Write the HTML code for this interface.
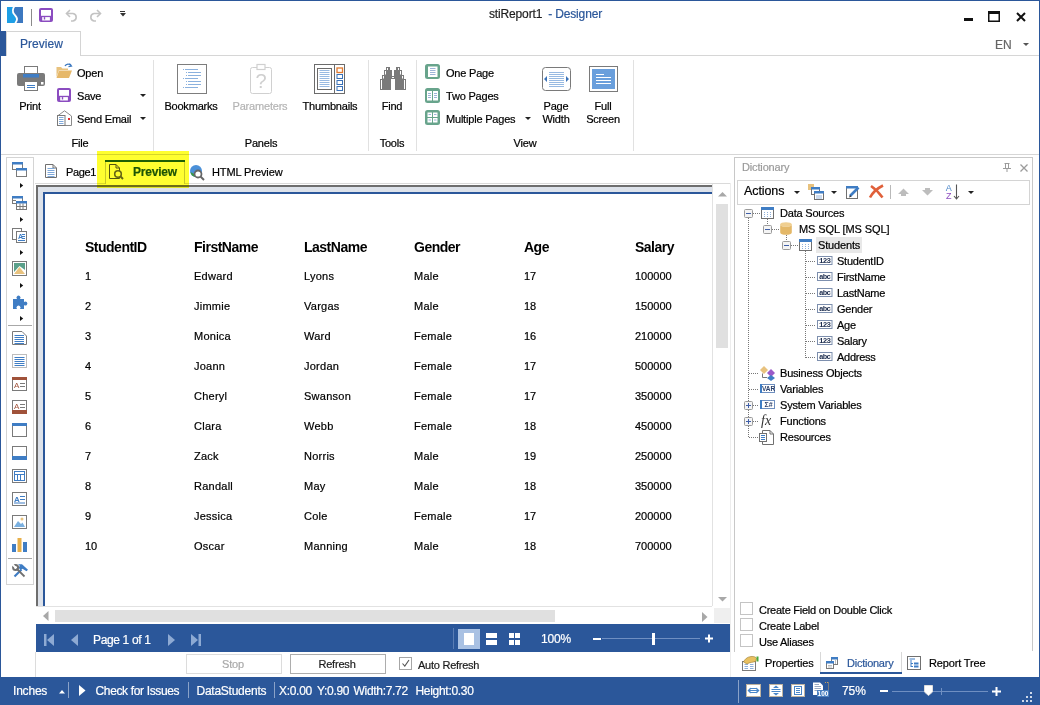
<!DOCTYPE html>
<html><head><meta charset="utf-8">
<style>
*{margin:0;padding:0;box-sizing:border-box}
html,body{width:1040px;height:705px;overflow:hidden;background:#fff;font-family:"Liberation Sans",sans-serif;color:#222;font-size:12px}
.a{position:absolute}
.t{position:absolute;white-space:nowrap;line-height:1;-webkit-text-stroke:0.2px currentColor}
svg{position:absolute;overflow:visible}
</style></head><body>
<div class="a" style="left:0px;top:0px;width:1040px;height:1px;background:#2b579a;"></div>
<div class="a" style="left:0px;top:0px;width:1px;height:705px;background:#2b579a;"></div>
<div class="a" style="left:1039px;top:0px;width:1px;height:705px;background:#2b579a;"></div>
<svg style="left:7px;top:7px" width="16" height="16" viewBox="0 0 16 16"><path d="M0 0 H7.2 C5.6 2 5.4 4.8 7 7 C8.5 9 10.8 10.5 9.9 13 C9.5 14.3 8.8 15.3 8.2 16 H0 Z" fill="#1d9fe6"/><path d="M16 0 H7.2 C5.6 2 5.4 4.8 7 7 C8.5 9 10.8 10.5 9.9 13 C9.5 14.3 8.8 15.3 8.2 16 H16 Z" fill="#3c78c0"/><path d="M7.2 -0.5 C5.6 2 5.4 4.8 7 7 C8.5 9 10.8 10.5 9.9 13 C9.5 14.3 8.8 15.3 8.2 16.5" stroke="#fff" stroke-width="1.8" fill="none"/></svg>
<div class="a" style="left:31px;top:9px;width:1px;height:17px;background:#8a8a8a;"></div>
<svg style="left:39px;top:8px" width="14" height="14" viewBox="0 0 14 14"><rect x="0" y="0" width="14" height="14" rx="2" fill="#8b4cc0"/><rect x="2" y="2" width="10" height="5.8" fill="#fff"/><rect x="3.2" y="9.1" width="7.7" height="3.4" fill="#fff"/><rect x="4.8" y="9.1" width="1.4" height="2.4" fill="#8b4cc0"/></svg>
<svg style="left:65px;top:9px" width="13" height="12" viewBox="0 0 13 12"><path d="M2 4.5 H8 A3.8 3.8 0 0 1 8 12 H6" stroke="#c3c3c3" stroke-width="1.6" fill="none"/><path d="M5 1 L1.5 4.5 L5 8" stroke="#c3c3c3" stroke-width="1.6" fill="none"/></svg>
<svg style="left:89px;top:9px" width="13" height="12" viewBox="0 0 13 12"><path d="M11 4.5 H5 A3.8 3.8 0 0 0 5 12 H7" stroke="#c3c3c3" stroke-width="1.6" fill="none"/><path d="M8 1 L11.5 4.5 L8 8" stroke="#c3c3c3" stroke-width="1.6" fill="none"/></svg>
<div class="a" style="left:120px;top:11px;width:5px;height:1px;background:#333;"></div>
<svg style="left:119.5px;top:13px" width="6" height="4" viewBox="0 0 6 4"><path d="M0 0 H6 L3 3.5 Z" fill="#333"/></svg>
<div class="t" style="left:489px;top:7.84px;font-size:12px;color:#1e1e1e;letter-spacing:-0.15px;">stiReport1</div>
<div class="t" style="left:545px;top:7.84px;font-size:12px;color:#2b579a;letter-spacing:-0.15px;">&nbsp;- Designer</div>
<div class="a" style="left:964px;top:18px;width:9px;height:3px;background:#111;"></div>
<svg style="left:988px;top:11px" width="11" height="10" viewBox="0 0 11 10"><rect x="0.75" y="0.75" width="10.5" height="9.5" fill="none" stroke="#111" stroke-width="1.5"/><rect x="0.5" y="0.5" width="11" height="2.5" fill="#111"/></svg>
<svg style="left:1016px;top:12px" width="10" height="10" viewBox="0 0 10 10"><path d="M1 1 L9 9 M9 1 L1 9" stroke="#111" stroke-width="2"/></svg>
<div class="a" style="left:1px;top:31px;width:5px;height:25px;background:#2b579a;"></div>
<div class="a" style="left:6px;top:31px;width:75px;height:25px;background:#fff;border:1px solid #d4d4d4;border-bottom:none;"></div>
<div class="a" style="left:81px;top:55px;width:958px;height:1px;background:#d6d6d6;"></div>
<div class="t" style="left:20px;top:37.84px;font-size:12px;color:#2b579a;letter-spacing:0.05px;">Preview</div>
<div class="t" style="left:995px;top:38.84px;font-size:12px;color:#666;">EN</div>
<svg style="left:1023px;top:43px" width="6" height="4" viewBox="0 0 6 4"><path d="M0 0 H6 L3 3 Z" fill="#555"/></svg>
<div class="a" style="left:1px;top:154px;width:1038px;height:1px;background:#d6d6d6;"></div>
<div class="a" style="left:153px;top:60px;width:1px;height:91px;background:#e1e1e1;"></div>
<div class="a" style="left:368px;top:60px;width:1px;height:91px;background:#e1e1e1;"></div>
<div class="a" style="left:416px;top:60px;width:1px;height:91px;background:#e1e1e1;"></div>
<div class="a" style="left:633px;top:60px;width:1px;height:91px;background:#e1e1e1;"></div>
<svg style="left:17px;top:66px" width="28" height="25" viewBox="0 0 28 25"><rect x="7.5" y="0.5" width="13" height="7.5" fill="#fff" stroke="#7a7a7a" stroke-width="1"/><rect x="0" y="7" width="28" height="13" rx="2" fill="#7a7a7a"/><rect x="6" y="8" width="16" height="3.5" fill="#3f7dc4"/><rect x="24" y="16" width="2.5" height="2.5" fill="#fff"/><rect x="7.5" y="15.5" width="13" height="9" fill="#fff" stroke="#7a7a7a" stroke-width="1"/><path d="M10 19.5 H18 M10 21.5 H18" stroke="#3f7dc4" stroke-width="1"/></svg>
<div class="t" style="left:-70px;width:200px;text-align:center;top:100.69px;font-size:11px;color:#000;letter-spacing:-0.2px;">Print</div>
<svg style="left:56px;top:63px" width="16" height="16" viewBox="0 0 16 16"><path d="M0.5 4 H5 L6.5 5.5 H12 V7 H3 L0.5 14 Z" fill="#e8c27e"/><path d="M3 7.5 H16 L13 15 H0.5 Z" fill="#e6b86a"/><path d="M9 3 A3.5 3.5 0 0 1 15 2.5" stroke="#3b78c0" stroke-width="1.3" fill="none"/><path d="M13.5 0.5 L15.5 3 L12.5 3.6" stroke="#3b78c0" stroke-width="1.2" fill="none"/></svg>
<div class="t" style="left:77px;top:67.69px;font-size:11px;color:#000;letter-spacing:-0.2px;">Open</div>
<svg style="left:57px;top:88px" width="14" height="14" viewBox="0 0 14 14"><rect x="0" y="0" width="14" height="14" rx="2" fill="#8b4cc0"/><rect x="2" y="2" width="10" height="5.8" fill="#fff"/><rect x="3.2" y="9.1" width="7.7" height="3.4" fill="#fff"/><rect x="4.8" y="9.1" width="1.4" height="2.4" fill="#8b4cc0"/></svg>
<div class="t" style="left:77px;top:90.69px;font-size:11px;color:#000;letter-spacing:-0.2px;">Save</div>
<svg style="left:140px;top:94px" width="6" height="4" viewBox="0 0 6 4"><path d="M0 0 H6 L3 3 Z" fill="#222"/></svg>
<svg style="left:57px;top:110px" width="15" height="16" viewBox="0 0 15 16"><path d="M0.5 6 L7.5 0.8 L14.5 6 V15.5 H0.5 Z" fill="#fff" stroke="#8a8a8a" stroke-width="1"/><rect x="0.5" y="5.5" width="7.5" height="10" fill="#fff" stroke="#7a7a7a" stroke-width="1"/><path d="M2 7.5 H6.5 M2 9.5 H6.5 M2 11.5 H6.5 M2 13.5 H6.5" stroke="#7ea8da" stroke-width="1"/><rect x="11" y="8" width="2" height="2" fill="#e03030"/></svg>
<div class="t" style="left:77px;top:113.69px;font-size:11px;color:#000;letter-spacing:-0.2px;">Send Email</div>
<svg style="left:140px;top:117px" width="6" height="4" viewBox="0 0 6 4"><path d="M0 0 H6 L3 3 Z" fill="#222"/></svg>
<div class="t" style="left:-20px;width:200px;text-align:center;top:137.69px;font-size:11px;color:#000;letter-spacing:-0.2px;">File</div>
<svg style="left:177px;top:64px" width="30" height="30" viewBox="0 0 30 30"><rect x="0.5" y="0.5" width="29" height="29" fill="#fff" stroke="#7d7d7d" stroke-width="1"/><path d="M6.0 5.5 H7.0 M8 5.5 H21" stroke="#7ea8da" stroke-width="0.9"/><path d="M9.0 8.5 H10.0 M11 8.5 H24" stroke="#7ea8da" stroke-width="0.9"/><path d="M9.0 11.5 H10.0 M11 11.5 H24" stroke="#7ea8da" stroke-width="0.9"/><path d="M6.0 14.5 H7.0 M8 14.5 H21" stroke="#7ea8da" stroke-width="0.9"/><path d="M9.0 17.5 H10.0 M11 17.5 H24" stroke="#7ea8da" stroke-width="0.9"/><path d="M9.0 20.5 H10.0 M11 20.5 H24" stroke="#7ea8da" stroke-width="0.9"/><path d="M6.0 23.5 H7.0 M8 23.5 H21" stroke="#7ea8da" stroke-width="0.9"/></svg>
<div class="t" style="left:91px;width:200px;text-align:center;top:100.69px;font-size:11px;color:#000;letter-spacing:-0.2px;">Bookmarks</div>
<svg style="left:250px;top:64px" width="22" height="30" viewBox="0 0 22 30"><rect x="0.5" y="3.5" width="21" height="26" rx="2" fill="#fff" stroke="#d0d0d0" stroke-width="1"/><rect x="7" y="0.5" width="8" height="5" fill="#fff" stroke="#d0d0d0" stroke-width="1.2"/><text x="11" y="24" font-size="20" text-anchor="middle" fill="#cfcfcf" font-family="Liberation Sans">?</text></svg>
<div class="t" style="left:160px;width:200px;text-align:center;top:100.69px;font-size:11px;color:#b4b4b4;letter-spacing:-0.2px;">Parameters</div>
<svg style="left:314px;top:64px" width="31" height="30" viewBox="0 0 31 30"><rect x="0.5" y="0.5" width="30" height="29" fill="#fff" stroke="#6b6b6b" stroke-width="1"/><rect x="3.5" y="4.5" width="14" height="21" fill="#fff" stroke="#6b6b6b" stroke-width="1"/><path d="M5.5 6.5 H15.5" stroke="#7ea8da" stroke-width="0.8"/><path d="M5.5 8.5 H15.5" stroke="#7ea8da" stroke-width="0.8"/><path d="M5.5 10.5 H15.5" stroke="#7ea8da" stroke-width="0.8"/><path d="M5.5 12.5 H15.5" stroke="#7ea8da" stroke-width="0.8"/><path d="M5.5 14.5 H15.5" stroke="#7ea8da" stroke-width="0.8"/><path d="M5.5 16.5 H15.5" stroke="#7ea8da" stroke-width="0.8"/><path d="M5.5 18.5 H15.5" stroke="#7ea8da" stroke-width="0.8"/><path d="M5.5 20.5 H15.5" stroke="#7ea8da" stroke-width="0.8"/><path d="M5.5 22.5 H15.5" stroke="#7ea8da" stroke-width="0.8"/><path d="M20.5 0.5 V29.5" stroke="#6b6b6b"/><rect x="23" y="4" width="5.5" height="4.5" fill="#fff" stroke="#e07a30" stroke-width="1.3"/><rect x="23" y="10.5" width="5.5" height="4" fill="none" stroke="#3b72b8" stroke-width="1"/><rect x="23" y="16.5" width="5.5" height="4" fill="none" stroke="#3b72b8" stroke-width="1"/><rect x="23" y="22.5" width="5.5" height="4" fill="none" stroke="#3b72b8" stroke-width="1"/></svg>
<div class="t" style="left:230px;width:200px;text-align:center;top:100.69px;font-size:11px;color:#000;letter-spacing:-0.2px;">Thumbnails</div>
<div class="t" style="left:161px;width:200px;text-align:center;top:137.69px;font-size:11px;color:#000;letter-spacing:-0.2px;">Panels</div>
<svg style="left:380px;top:67px" width="26" height="23" viewBox="0 0 26 23"><rect x="6" y="0" width="4" height="3.2" fill="#7a7a7a"/><rect x="4" y="3" width="8" height="5" fill="#7a7a7a"/><rect x="2" y="8" width="10" height="4" fill="#7a7a7a"/><rect x="0" y="12" width="11" height="11" fill="#7a7a7a"/><rect x="16" y="0" width="4" height="3.2" fill="#7a7a7a"/><rect x="14" y="3" width="8" height="5" fill="#7a7a7a"/><rect x="14" y="8" width="10" height="4" fill="#7a7a7a"/><rect x="15" y="12" width="11" height="11" fill="#7a7a7a"/><rect x="11" y="9" width="4" height="3" fill="#7a7a7a"/><rect x="7" y="1" width="1" height="2" fill="#fff"/><rect x="5" y="4" width="1" height="3.5" fill="#fff"/><rect x="3" y="9" width="1" height="2.5" fill="#fff"/><rect x="1" y="13" width="1" height="9" fill="#fff"/><rect x="18" y="1" width="1" height="2" fill="#fff"/><rect x="20" y="4" width="1" height="3.5" fill="#fff"/><rect x="22" y="9" width="1" height="2.5" fill="#fff"/><rect x="24" y="13" width="1" height="9" fill="#fff"/><rect x="12" y="10" width="2" height="1" fill="#fff"/></svg>
<div class="t" style="left:292px;width:200px;text-align:center;top:100.69px;font-size:11px;color:#000;letter-spacing:-0.2px;">Find</div>
<div class="t" style="left:292px;width:200px;text-align:center;top:137.69px;font-size:11px;color:#000;letter-spacing:-0.2px;">Tools</div>
<svg style="left:425px;top:64px" width="15" height="15" viewBox="0 0 15 15"><rect x="0" y="0" width="15" height="15" rx="2.5" fill="#68a48c"/><rect x="3" y="2.5" width="9.5" height="10.5" fill="#fff"/><path d="M5 4.5 H10.5 M5 6.5 H10.5 M5 8.5 H10.5 M5 10.5 H10.5" stroke="#9db4d8" stroke-width="1"/></svg>
<div class="t" style="left:446px;top:67.69px;font-size:11px;color:#000;letter-spacing:-0.2px;">One Page</div>
<svg style="left:425px;top:88px" width="15" height="15" viewBox="0 0 15 15"><rect x="0" y="0" width="15" height="15" rx="2.5" fill="#68a48c"/><rect x="2" y="3" width="5" height="9.5" fill="#fff"/><rect x="8" y="3" width="5" height="9.5" fill="#fff"/><path d="M3 5.5 H6 M3 7.5 H6 M3 9.5 H6 M9 5.5 H12 M9 7.5 H12 M9 9.5 H12" stroke="#9db4d8" stroke-width="1"/></svg>
<div class="t" style="left:446px;top:90.69px;font-size:11px;color:#000;letter-spacing:-0.2px;">Two Pages</div>
<svg style="left:425px;top:110px" width="15" height="15" viewBox="0 0 15 15"><rect x="0" y="0" width="15" height="15" rx="2.5" fill="#68a48c"/><rect x="2.5" y="2.5" width="4.5" height="4.5" fill="#fff"/><rect x="8" y="2.5" width="4.5" height="4.5" fill="#fff"/><rect x="2.5" y="8" width="4.5" height="4.5" fill="#fff"/><rect x="8" y="8" width="4.5" height="4.5" fill="#fff"/><path d="M3.5 4.5 H6 M9 4.5 H11.5 M3.5 10 H6 M9 10 H11.5" stroke="#9db4d8" stroke-width="1"/></svg>
<div class="t" style="left:446px;top:113.69px;font-size:11px;color:#000;letter-spacing:-0.2px;">Multiple Pages</div>
<svg style="left:525px;top:117px" width="6" height="4" viewBox="0 0 6 4"><path d="M0 0 H6 L3 3 Z" fill="#222"/></svg>
<svg style="left:542px;top:67px" width="29" height="24" viewBox="0 0 29 24"><rect x="0.5" y="0.5" width="28" height="23" rx="3" fill="#fff" stroke="#7a7a7a" stroke-width="1"/><path d="M7 5.5 H22" stroke="#7ea8da" stroke-width="0.8"/><path d="M7 7.5 H22" stroke="#7ea8da" stroke-width="0.8"/><path d="M7 9.5 H22" stroke="#7ea8da" stroke-width="0.8"/><path d="M7 11.5 H22" stroke="#7ea8da" stroke-width="0.8"/><path d="M7 13.5 H22" stroke="#7ea8da" stroke-width="0.8"/><path d="M7 15.5 H22" stroke="#7ea8da" stroke-width="0.8"/><path d="M7 17.5 H22" stroke="#7ea8da" stroke-width="0.8"/><path d="M7 19.5 H22" stroke="#7ea8da" stroke-width="0.8"/><path d="M2 12 L5 9 V15 Z M27 12 L24 9 V15 Z" fill="#3b72b8"/></svg>
<div class="t" style="left:456px;width:200px;text-align:center;top:100.69px;font-size:11px;color:#000;letter-spacing:-0.2px;">Page</div>
<div class="t" style="left:456px;width:200px;text-align:center;top:113.69px;font-size:11px;color:#000;letter-spacing:-0.2px;">Width</div>
<svg style="left:589px;top:66px" width="29" height="26" viewBox="0 0 29 26"><rect x="0.5" y="0.5" width="28" height="25" fill="#fff" stroke="#7a7a7a" stroke-width="1"/><rect x="3" y="3" width="23" height="20" fill="#6a9fdc"/><path d="M7 8.5 H15 M7 11.5 H22 M7 14.5 H22 M7 17.5 H22" stroke="#fff" stroke-width="1"/></svg>
<div class="t" style="left:503px;width:200px;text-align:center;top:100.69px;font-size:11px;color:#000;letter-spacing:-0.2px;">Full</div>
<div class="t" style="left:503px;width:200px;text-align:center;top:113.69px;font-size:11px;color:#000;letter-spacing:-0.2px;">Screen</div>
<div class="t" style="left:425px;width:200px;text-align:center;top:137.69px;font-size:11px;color:#000;letter-spacing:-0.2px;">View</div>
<div class="a" style="left:6px;top:157px;width:28px;height:428px;background:#fff;border:1px solid #d4d4d4;"></div>
<svg style="left:12px;top:162px" width="15" height="15" viewBox="0 0 15 15"><rect x="0.5" y="0.5" width="10" height="7" fill="#fff" stroke="#7a7a7a"/><rect x="0" y="0" width="11" height="2.5" fill="#3f7dc4"/><rect x="4.5" y="6.5" width="10" height="8" fill="#fff" stroke="#7a7a7a"/><rect x="4" y="6" width="11" height="2.5" fill="#3f7dc4"/></svg>
<svg style="left:20px;top:183px" width="3" height="5" viewBox="0 0 3 5"><path d="M0 0 L3.2 2.5 L0 5 Z" fill="#111"/></svg>
<svg style="left:12px;top:196px" width="15" height="14" viewBox="0 0 15 14"><rect x="0.5" y="0.5" width="10" height="7" fill="#fff" stroke="#7a7a7a"/><rect x="0" y="0" width="11" height="2.5" fill="#3f7dc4"/><path d="M0 4.5 H4" stroke="#7a7a7a"/><rect x="4.5" y="5.5" width="10" height="8" fill="#fff" stroke="#7a7a7a"/><rect x="4" y="5" width="11" height="2.5" fill="#3f7dc4"/><path d="M4.5 10.5 H14.5 M8 7.5 V13.5 M11 7.5 V13.5" stroke="#7a7a7a"/></svg>
<svg style="left:20px;top:217px" width="3" height="5" viewBox="0 0 3 5"><path d="M0 0 L3.2 2.5 L0 5 Z" fill="#111"/></svg>
<svg style="left:12px;top:228px" width="15" height="15" viewBox="0 0 15 15"><rect x="0.5" y="0.5" width="9" height="11" fill="#fff" stroke="#7a7a7a"/><rect x="4.5" y="3.5" width="10" height="11" fill="#fff" stroke="#7a7a7a"/><text x="6" y="11" font-size="7" fill="#3f7dc4" font-family="Liberation Sans" font-weight="bold">A</text><path d="M10 6.5 H13 M10 8.5 H13 M10 10.5 H13 M6 12.5 H13" stroke="#3f7dc4"/></svg>
<svg style="left:20px;top:250px" width="3" height="5" viewBox="0 0 3 5"><path d="M0 0 L3.2 2.5 L0 5 Z" fill="#111"/></svg>
<svg style="left:12px;top:261px" width="15" height="15" viewBox="0 0 15 15"><rect x="0.5" y="0.5" width="14" height="14" fill="#fff" stroke="#7a7a7a"/><path d="M2 13 L7.5 6 L13 13 Z" fill="#e8c27e"/><path d="M2 2 H13 V9 L7.5 5 L2 11 Z" fill="#5aa08a"/></svg>
<svg style="left:20px;top:283px" width="3" height="5" viewBox="0 0 3 5"><path d="M0 0 L3.2 2.5 L0 5 Z" fill="#111"/></svg>
<svg style="left:12px;top:295px" width="15" height="14" viewBox="0 0 15 14"><path d="M1 4 H5 A2 2 0 1 1 8 4 H12 V7 A2 2 0 1 1 12 10 V14 H8 A2 2 0 1 0 5 14 H1 Z" fill="#3f7dc4"/></svg>
<svg style="left:20px;top:316px" width="3" height="5" viewBox="0 0 3 5"><path d="M0 0 L3.2 2.5 L0 5 Z" fill="#111"/></svg>
<div class="a" style="left:8px;top:325px;width:24px;height:1px;background:#a8a8a8;"></div>
<svg style="left:12px;top:331px" width="15" height="14" viewBox="0 0 15 14"><path d="M0.5 0.5 H10 L14.5 5 V13.5 H0.5 Z" fill="#fff" stroke="#7a7a7a"/><path d="M2.5 4.5 H12" stroke="#3f7dc4"/><path d="M2.5 6.5 H12" stroke="#3f7dc4"/><path d="M2.5 8.5 H12" stroke="#3f7dc4"/><path d="M2.5 10.5 H12" stroke="#3f7dc4"/><path d="M2.5 12.5 H12" stroke="#3f7dc4"/></svg>
<svg style="left:12px;top:354px" width="15" height="14" viewBox="0 0 15 14"><rect x="0.5" y="0.5" width="14" height="13" fill="#fff" stroke="#7a7a7a" stroke-dasharray="1 1"/><path d="M2.5 3.5 H12.5" stroke="#3f7dc4"/><path d="M2.5 5.5 H12.5" stroke="#3f7dc4"/><path d="M2.5 7.5 H12.5" stroke="#3f7dc4"/><path d="M2.5 9.5 H12.5" stroke="#3f7dc4"/><path d="M2.5 11.5 H12.5" stroke="#3f7dc4"/></svg>
<svg style="left:12px;top:377px" width="15" height="14" viewBox="0 0 15 14"><rect x="0.5" y="0.5" width="14" height="13" fill="#fff" stroke="#7a7a7a"/><rect x="0" y="0" width="15" height="3" fill="#a0523a"/><text x="2" y="11" font-size="8" fill="#a0523a" font-family="Liberation Sans">A</text><path d="M8 6.5 H13 M8 9.5 H13" stroke="#7a7a7a"/></svg>
<svg style="left:12px;top:400px" width="15" height="14" viewBox="0 0 15 14"><rect x="0.5" y="0.5" width="14" height="13" fill="#fff" stroke="#7a7a7a"/><rect x="0" y="10" width="15" height="4" fill="#a0523a"/><text x="2" y="9" font-size="8" fill="#a0523a" font-family="Liberation Sans">A</text><path d="M8 4.5 H13 M8 7.5 H13" stroke="#7a7a7a"/></svg>
<svg style="left:12px;top:423px" width="15" height="14" viewBox="0 0 15 14"><rect x="0.5" y="0.5" width="14" height="13" fill="#fff" stroke="#7a7a7a"/><rect x="0" y="0" width="15" height="3" fill="#3f7dc4"/></svg>
<svg style="left:12px;top:446px" width="15" height="14" viewBox="0 0 15 14"><rect x="0.5" y="0.5" width="14" height="13" fill="#fff" stroke="#7a7a7a"/><rect x="0" y="10" width="15" height="4" fill="#3f7dc4"/></svg>
<svg style="left:12px;top:469px" width="15" height="14" viewBox="0 0 15 14"><rect x="0.5" y="0.5" width="14" height="13" fill="#fff" stroke="#7a7a7a"/><rect x="2.5" y="2.5" width="10" height="9" fill="#fff" stroke="#3f7dc4"/><path d="M2.5 5.5 H12.5 M5.5 5.5 V11.5 M8.5 5.5 V11.5" stroke="#3f7dc4"/></svg>
<svg style="left:12px;top:492px" width="15" height="14" viewBox="0 0 15 14"><rect x="0.5" y="0.5" width="14" height="13" fill="#fff" stroke="#7a7a7a"/><text x="2" y="10" font-size="8" fill="#3f7dc4" font-family="Liberation Sans" font-weight="bold">A</text><path d="M8 4.5 H13 M8 7.5 H13 M2 11 H13" stroke="#3f7dc4"/></svg>
<svg style="left:12px;top:515px" width="15" height="14" viewBox="0 0 15 14"><rect x="0.5" y="0.5" width="14" height="13" fill="#fff" stroke="#7a7a7a"/><path d="M2 12 L6 6 L9 9 L10.5 7.5 L13 12 Z" fill="#7ab0e0"/><circle cx="10" cy="4" r="1.5" fill="#e8c27e"/></svg>
<svg style="left:12px;top:538px" width="15" height="14" viewBox="0 0 15 14"><rect x="0" y="6" width="4" height="8" fill="#3f7dc4"/><rect x="5.5" y="0" width="4" height="14" fill="#e8b04a"/><rect x="11" y="4" width="4" height="10" fill="#3f7dc4"/></svg>
<div class="a" style="left:8px;top:558px;width:24px;height:1px;background:#a8a8a8;"></div>
<svg style="left:12px;top:564px" width="16" height="13" viewBox="0 0 16 13"><path d="M2.5 12.5 L9.5 5.5" stroke="#3f7dc4" stroke-width="2.2"/><path d="M6 0.3 L10 0.3 L16 5.8 L14.5 7.3 L10.5 4.8 L8.5 6 L6.2 3.2 L8 2 Z" fill="#3f7dc4"/><path d="M12.5 12.5 L4.5 4.5" stroke="#707070" stroke-width="1.8"/><circle cx="3.6" cy="3.6" r="2.5" stroke="#707070" stroke-width="2" fill="none"/><path d="M-0.5 -0.5 L3.4 3.4" stroke="#fff" stroke-width="2"/></svg>
<div class="a" style="left:35px;top:183px;width:696px;height:1px;background:#dadada;"></div>
<svg style="left:45px;top:164px" width="12" height="14" viewBox="0 0 12 14"><path d="M0.5 0.5 H8 L11.5 4 V13.5 H0.5 Z" fill="#fff" stroke="#707070"/><path d="M8 0.5 V4 H11.5" fill="none" stroke="#707070"/><path d="M2.5 4.5 H9.5" stroke="#7ea8da"/><path d="M2.5 6.5 H9.5" stroke="#7ea8da"/><path d="M2.5 8.5 H9.5" stroke="#7ea8da"/><path d="M2.5 10.5 H9.5" stroke="#7ea8da"/><path d="M2.5 12.5 H9.5" stroke="#7ea8da"/></svg>
<div class="t" style="left:66px;top:166.69px;font-size:11px;color:#000;letter-spacing:-0.35px;">Page1</div>
<div class="a" style="left:105px;top:160px;width:80px;height:24px;background:#fff;border:1px solid #c8c8c8;border-bottom:none;"></div>
<div class="a" style="left:105px;top:160px;width:80px;height:2px;background:#1f5f10;"></div>
<svg style="left:109px;top:164px" width="15" height="16" viewBox="0 0 15 16"><path d="M0.5 0.5 H7 L10.5 4 V14.5 H0.5 Z" fill="none" stroke="#555"/><path d="M7 0.5 V4 H10.5" fill="none" stroke="#555"/><circle cx="9" cy="10" r="3.3" fill="#fff" stroke="#666" stroke-width="1.6"/><path d="M11.3 12.3 L14 15" stroke="#666" stroke-width="2"/></svg>
<div class="t" style="left:133px;top:165.84px;font-size:12px;color:#1c5410;font-weight:bold;letter-spacing:-0.2px;">Preview</div>
<svg style="left:190px;top:165px" width="15" height="15" viewBox="0 0 15 15"><circle cx="6" cy="6" r="6" fill="#4a90d9"/><path d="M0.5 7 A6 6 0 0 0 5 12 L4 9 Z" fill="#3a9a40"/><circle cx="8" cy="9" r="3.5" fill="#fff" stroke="#666" stroke-width="1.8"/><path d="M10.5 11.5 L14 15" stroke="#666" stroke-width="2"/></svg>
<div class="t" style="left:212px;top:166.69px;font-size:11px;color:#000;letter-spacing:-0.1px;">HTML Preview</div>
<div class="a" style="left:730px;top:183px;width:1px;height:494px;background:#ededed;"></div>
<div class="a" style="left:36px;top:185px;width:676px;height:421px;background:#dde2ea;"></div>
<div class="a" style="left:36px;top:185px;width:676px;height:2px;background:#6e6e6e;"></div>
<div class="a" style="left:36px;top:185px;width:2px;height:421px;background:#6e6e6e;"></div>
<div class="a" style="left:43px;top:192px;width:669px;height:414px;background:#fff;"></div>
<div class="a" style="left:43px;top:192px;width:669px;height:2px;background:#2b579a;"></div>
<div class="a" style="left:43px;top:192px;width:2px;height:414px;background:#2b579a;"></div>
<div class="a" style="left:712px;top:184px;width:1px;height:422px;background:#e2e2e2;"></div>
<div class="a" style="left:713px;top:184px;width:17px;height:422px;background:#fff;"></div>
<svg style="left:718px;top:191.5px" width="9" height="5" viewBox="0 0 9 5"><path d="M0 4.5 L4.5 0 L9 4.5 Z" fill="#a8a8a8"/></svg>
<div class="a" style="left:716px;top:204px;width:12px;height:144px;background:#e0e0e0;"></div>
<svg style="left:718px;top:597px" width="9" height="5" viewBox="0 0 9 5"><path d="M0 0 L4.5 4.5 L9 0 Z" fill="#a8a8a8"/></svg>
<div class="a" style="left:36px;top:606px;width:676px;height:18px;background:#fff;"></div>
<div class="a" style="left:36px;top:606px;width:676px;height:1px;background:#e2e2e2;"></div>
<svg style="left:43px;top:611px" width="6" height="10" viewBox="0 0 6 10"><path d="M5.5 0 L0 5 L5.5 10 Z" fill="#a8a8a8"/></svg>
<div class="a" style="left:55px;top:610px;width:500px;height:12px;background:#e0e0e0;"></div>
<svg style="left:702px;top:611.5px" width="6" height="10" viewBox="0 0 6 10"><path d="M0 0 L5.5 5 L0 10 Z" fill="#a8a8a8"/></svg>
<div class="a" style="left:714px;top:608px;width:16px;height:15px;background:#efefef;"></div>
<div class="t" style="left:85px;top:240.15px;font-size:14px;color:#000;font-weight:bold;letter-spacing:-0.5px;-webkit-text-stroke:0;">StudentID</div>
<div class="t" style="left:194px;top:240.15px;font-size:14px;color:#000;font-weight:bold;letter-spacing:-0.5px;-webkit-text-stroke:0;">FirstName</div>
<div class="t" style="left:304px;top:240.15px;font-size:14px;color:#000;font-weight:bold;letter-spacing:-0.5px;-webkit-text-stroke:0;">LastName</div>
<div class="t" style="left:414px;top:240.15px;font-size:14px;color:#000;font-weight:bold;letter-spacing:-0.5px;-webkit-text-stroke:0;">Gender</div>
<div class="t" style="left:524px;top:240.15px;font-size:14px;color:#000;font-weight:bold;letter-spacing:-0.5px;-webkit-text-stroke:0;">Age</div>
<div class="t" style="left:635px;top:240.15px;font-size:14px;color:#000;font-weight:bold;letter-spacing:-0.5px;-webkit-text-stroke:0;">Salary</div>
<div class="t" style="left:85px;top:270.69px;font-size:11px;color:#000;letter-spacing:0px;">1</div>
<div class="t" style="left:194px;top:270.69px;font-size:11px;color:#000;letter-spacing:0.25px;">Edward</div>
<div class="t" style="left:304px;top:270.69px;font-size:11px;color:#000;letter-spacing:0.25px;">Lyons</div>
<div class="t" style="left:414px;top:270.69px;font-size:11px;color:#000;letter-spacing:0.25px;">Male</div>
<div class="t" style="left:524px;top:270.69px;font-size:11px;color:#000;letter-spacing:0px;">17</div>
<div class="t" style="left:635px;top:270.69px;font-size:11px;color:#000;letter-spacing:0px;">100000</div>
<div class="t" style="left:85px;top:300.69px;font-size:11px;color:#000;letter-spacing:0px;">2</div>
<div class="t" style="left:194px;top:300.69px;font-size:11px;color:#000;letter-spacing:0.25px;">Jimmie</div>
<div class="t" style="left:304px;top:300.69px;font-size:11px;color:#000;letter-spacing:0.25px;">Vargas</div>
<div class="t" style="left:414px;top:300.69px;font-size:11px;color:#000;letter-spacing:0.25px;">Male</div>
<div class="t" style="left:524px;top:300.69px;font-size:11px;color:#000;letter-spacing:0px;">18</div>
<div class="t" style="left:635px;top:300.69px;font-size:11px;color:#000;letter-spacing:0px;">150000</div>
<div class="t" style="left:85px;top:330.69px;font-size:11px;color:#000;letter-spacing:0px;">3</div>
<div class="t" style="left:194px;top:330.69px;font-size:11px;color:#000;letter-spacing:0.25px;">Monica</div>
<div class="t" style="left:304px;top:330.69px;font-size:11px;color:#000;letter-spacing:0.25px;">Ward</div>
<div class="t" style="left:414px;top:330.69px;font-size:11px;color:#000;letter-spacing:0.25px;">Female</div>
<div class="t" style="left:524px;top:330.69px;font-size:11px;color:#000;letter-spacing:0px;">16</div>
<div class="t" style="left:635px;top:330.69px;font-size:11px;color:#000;letter-spacing:0px;">210000</div>
<div class="t" style="left:85px;top:360.69px;font-size:11px;color:#000;letter-spacing:0px;">4</div>
<div class="t" style="left:194px;top:360.69px;font-size:11px;color:#000;letter-spacing:0.25px;">Joann</div>
<div class="t" style="left:304px;top:360.69px;font-size:11px;color:#000;letter-spacing:0.25px;">Jordan</div>
<div class="t" style="left:414px;top:360.69px;font-size:11px;color:#000;letter-spacing:0.25px;">Female</div>
<div class="t" style="left:524px;top:360.69px;font-size:11px;color:#000;letter-spacing:0px;">17</div>
<div class="t" style="left:635px;top:360.69px;font-size:11px;color:#000;letter-spacing:0px;">500000</div>
<div class="t" style="left:85px;top:390.69px;font-size:11px;color:#000;letter-spacing:0px;">5</div>
<div class="t" style="left:194px;top:390.69px;font-size:11px;color:#000;letter-spacing:0.25px;">Cheryl</div>
<div class="t" style="left:304px;top:390.69px;font-size:11px;color:#000;letter-spacing:0.25px;">Swanson</div>
<div class="t" style="left:414px;top:390.69px;font-size:11px;color:#000;letter-spacing:0.25px;">Female</div>
<div class="t" style="left:524px;top:390.69px;font-size:11px;color:#000;letter-spacing:0px;">17</div>
<div class="t" style="left:635px;top:390.69px;font-size:11px;color:#000;letter-spacing:0px;">350000</div>
<div class="t" style="left:85px;top:420.69px;font-size:11px;color:#000;letter-spacing:0px;">6</div>
<div class="t" style="left:194px;top:420.69px;font-size:11px;color:#000;letter-spacing:0.25px;">Clara</div>
<div class="t" style="left:304px;top:420.69px;font-size:11px;color:#000;letter-spacing:0.25px;">Webb</div>
<div class="t" style="left:414px;top:420.69px;font-size:11px;color:#000;letter-spacing:0.25px;">Female</div>
<div class="t" style="left:524px;top:420.69px;font-size:11px;color:#000;letter-spacing:0px;">18</div>
<div class="t" style="left:635px;top:420.69px;font-size:11px;color:#000;letter-spacing:0px;">450000</div>
<div class="t" style="left:85px;top:450.69px;font-size:11px;color:#000;letter-spacing:0px;">7</div>
<div class="t" style="left:194px;top:450.69px;font-size:11px;color:#000;letter-spacing:0.25px;">Zack</div>
<div class="t" style="left:304px;top:450.69px;font-size:11px;color:#000;letter-spacing:0.25px;">Norris</div>
<div class="t" style="left:414px;top:450.69px;font-size:11px;color:#000;letter-spacing:0.25px;">Male</div>
<div class="t" style="left:524px;top:450.69px;font-size:11px;color:#000;letter-spacing:0px;">19</div>
<div class="t" style="left:635px;top:450.69px;font-size:11px;color:#000;letter-spacing:0px;">250000</div>
<div class="t" style="left:85px;top:480.69px;font-size:11px;color:#000;letter-spacing:0px;">8</div>
<div class="t" style="left:194px;top:480.69px;font-size:11px;color:#000;letter-spacing:0.25px;">Randall</div>
<div class="t" style="left:304px;top:480.69px;font-size:11px;color:#000;letter-spacing:0.25px;">May</div>
<div class="t" style="left:414px;top:480.69px;font-size:11px;color:#000;letter-spacing:0.25px;">Male</div>
<div class="t" style="left:524px;top:480.69px;font-size:11px;color:#000;letter-spacing:0px;">18</div>
<div class="t" style="left:635px;top:480.69px;font-size:11px;color:#000;letter-spacing:0px;">350000</div>
<div class="t" style="left:85px;top:510.69px;font-size:11px;color:#000;letter-spacing:0px;">9</div>
<div class="t" style="left:194px;top:510.69px;font-size:11px;color:#000;letter-spacing:0.25px;">Jessica</div>
<div class="t" style="left:304px;top:510.69px;font-size:11px;color:#000;letter-spacing:0.25px;">Cole</div>
<div class="t" style="left:414px;top:510.69px;font-size:11px;color:#000;letter-spacing:0.25px;">Female</div>
<div class="t" style="left:524px;top:510.69px;font-size:11px;color:#000;letter-spacing:0px;">17</div>
<div class="t" style="left:635px;top:510.69px;font-size:11px;color:#000;letter-spacing:0px;">200000</div>
<div class="t" style="left:85px;top:540.69px;font-size:11px;color:#000;letter-spacing:0px;">10</div>
<div class="t" style="left:194px;top:540.69px;font-size:11px;color:#000;letter-spacing:0.25px;">Oscar</div>
<div class="t" style="left:304px;top:540.69px;font-size:11px;color:#000;letter-spacing:0.25px;">Manning</div>
<div class="t" style="left:414px;top:540.69px;font-size:11px;color:#000;letter-spacing:0.25px;">Male</div>
<div class="t" style="left:524px;top:540.69px;font-size:11px;color:#000;letter-spacing:0px;">18</div>
<div class="t" style="left:635px;top:540.69px;font-size:11px;color:#000;letter-spacing:0px;">700000</div>
<div class="a" style="left:36px;top:624px;width:694px;height:28px;background:#2b579a;"></div>
<svg style="left:44px;top:634px" width="10" height="12" viewBox="0 0 10 12"><rect x="0" y="0" width="2.5" height="12" fill="#8eaad3"/><path d="M10 0 V12 L3 6 Z" fill="#8eaad3"/></svg>
<svg style="left:71px;top:634px" width="7" height="12" viewBox="0 0 7 12"><path d="M7 0 V12 L0 6 Z" fill="#8eaad3"/></svg>
<div class="t" style="left:93px;top:633.84px;font-size:12px;color:#fff;letter-spacing:-0.35px;">Page 1 of 1</div>
<svg style="left:168px;top:634px" width="7" height="12" viewBox="0 0 7 12"><path d="M0 0 V12 L7 6 Z" fill="#8eaad3"/></svg>
<svg style="left:191px;top:634px" width="10" height="12" viewBox="0 0 10 12"><path d="M0 0 V12 L7 6 Z" fill="#8eaad3"/><rect x="7.5" y="0" width="2.5" height="12" fill="#8eaad3"/></svg>
<div class="a" style="left:453px;top:628px;width:1px;height:21px;background:#5a7db5;"></div>
<div class="a" style="left:458px;top:629px;width:22px;height:20px;background:#a9c1e3;"></div>
<div class="a" style="left:464px;top:633px;width:10px;height:12px;background:#fff;"></div>
<svg style="left:486px;top:633px" width="11" height="12" viewBox="0 0 11 12"><rect x="0" y="0" width="11" height="5" fill="#fff"/><rect x="0" y="7" width="11" height="5" fill="#fff"/></svg>
<svg style="left:509px;top:633px" width="11" height="12" viewBox="0 0 11 12"><rect x="0" y="0" width="5" height="5" fill="#fff"/><rect x="6" y="0" width="5" height="5" fill="#fff"/><rect x="0" y="7" width="5" height="5" fill="#fff"/><rect x="6" y="7" width="5" height="5" fill="#fff"/></svg>
<div class="t" style="left:541px;top:632.84px;font-size:12px;color:#fff;letter-spacing:-0.2px;">100%</div>
<div class="a" style="left:593px;top:638px;width:8px;height:2px;background:#fff;"></div>
<div class="a" style="left:602px;top:638px;width:98px;height:1px;background:#6f8fc2;"></div>
<div class="a" style="left:652px;top:633px;width:3px;height:12px;background:#fff;"></div>
<svg style="left:705px;top:634px" width="8" height="9" viewBox="0 0 8 9"><path d="M0 4.5 H8 M4 0.5 V8.5" stroke="#fff" stroke-width="2"/></svg>
<div class="a" style="left:35px;top:652px;width:1px;height:25px;background:#dcdcdc;"></div>
<div class="a" style="left:186px;top:654px;width:96px;height:20px;background:#fff;border:1px solid #dcdcdc;"></div>
<div class="t" style="left:133px;width:200px;text-align:center;top:658.69px;font-size:11px;color:#a9a9a9;letter-spacing:-0.2px;">Stop</div>
<div class="a" style="left:290px;top:654px;width:96px;height:20px;background:#fff;border:1px solid #adadad;"></div>
<div class="t" style="left:237px;width:200px;text-align:center;top:658.69px;font-size:11px;color:#1b1b1b;letter-spacing:-0.2px;">Refresh</div>
<div class="a" style="left:399px;top:657px;width:13px;height:13px;background:#fff;border:1px solid #a6a6a6;"></div>
<svg style="left:401px;top:659px" width="9" height="9" viewBox="0 0 9 9"><path d="M1.5 4.5 L3.8 7 L8 1" stroke="#555" stroke-width="1.1" fill="none"/></svg>
<div class="t" style="left:418px;top:659.69px;font-size:11px;color:#1b1b1b;letter-spacing:-0.25px;">Auto Refresh</div>
<div class="a" style="left:734px;top:157px;width:299px;height:495px;background:#fff;border:1px solid #c8c8c8;border-bottom:none;"></div>
<div class="t" style="left:742px;top:161.69px;font-size:11px;color:#9b9b9b;letter-spacing:-0.15px;">Dictionary</div>
<svg style="left:1003px;top:163px" width="8" height="9" viewBox="0 0 8 9"><path d="M1.5 0.5 H6.5 M2.5 0.5 V5.5 M5.5 0.5 V5.5 M0 5.5 H8 M4 5.5 V9" stroke="#9b9b9b" stroke-width="1" fill="none"/></svg>
<svg style="left:1020px;top:164px" width="8" height="8" viewBox="0 0 8 8"><path d="M0.5 0.5 L7.5 7.5 M7.5 0.5 L0.5 7.5" stroke="#9b9b9b" stroke-width="1.3"/></svg>
<div class="a" style="left:737px;top:180px;width:293px;height:25px;background:#fff;border:1px solid #d4d4d4;"></div>
<div class="t" style="left:744px;top:185.42px;font-size:12.5px;color:#000;letter-spacing:-0.1px;">Actions</div>
<svg style="left:794px;top:191px" width="6" height="4" viewBox="0 0 6 4"><path d="M0 0 H6 L3 3 Z" fill="#222"/></svg>
<svg style="left:808px;top:184px" width="16" height="16" viewBox="0 0 16 16"><rect x="0" y="0" width="6" height="6" fill="#e8c27e"/><rect x="3.5" y="3.5" width="8" height="7" fill="#fff" stroke="#707070"/><rect x="3" y="3" width="9" height="2.5" fill="#3f7dc4"/><rect x="6.5" y="7.5" width="9" height="8" fill="#fff" stroke="#707070"/><rect x="6" y="7" width="10" height="2.5" fill="#3f7dc4"/><path d="M8 12 H14 M8 14 H14" stroke="#9ab7dd"/></svg>
<svg style="left:831px;top:191px" width="6" height="4" viewBox="0 0 6 4"><path d="M0 0 H6 L3 3 Z" fill="#222"/></svg>
<svg style="left:846px;top:185px" width="14" height="14" viewBox="0 0 14 14"><rect x="0.5" y="1.5" width="11" height="12" fill="#fff" stroke="#707070"/><rect x="0" y="1" width="12" height="2.5" fill="#3f7dc4"/><path d="M4 11 L12.5 2.5" stroke="#3f7dc4" stroke-width="2.6"/><path d="M3 12.5 L4 10 L5.5 11.5 Z" fill="#333"/></svg>
<svg style="left:869px;top:185px" width="15" height="13" viewBox="0 0 15 13"><path d="M1 12.5 Q5 5 14 0.5" stroke="#e0603a" stroke-width="2.6" fill="none"/><path d="M2 1 Q8 5 13.5 12.5" stroke="#e0603a" stroke-width="2.6" fill="none"/></svg>
<div class="a" style="left:890px;top:185px;width:1px;height:14px;background:#b9b9b9;"></div>
<svg style="left:898px;top:188px" width="11" height="8" viewBox="0 0 11 8"><path d="M0 6 L5.5 0.5 L11 6 H8 V8 H3 V6 Z" fill="#bdbdbd"/></svg>
<svg style="left:922px;top:188px" width="11" height="8" viewBox="0 0 11 8"><path d="M0 2 L5.5 7.5 L11 2 H8 V0 H3 V2 Z" fill="#bdbdbd"/></svg>
<svg style="left:946px;top:184px" width="15" height="16" viewBox="0 0 15 16"><text x="-0.3" y="7.2" font-size="9" fill="#4a86c8" font-family="Liberation Sans">A</text><text x="0" y="15.3" font-size="9" fill="#8d4fc0" font-family="Liberation Sans">Z</text><path d="M10.5 0.5 V14.5 M8 12 L10.5 15 L13 12" stroke="#555" stroke-width="1.1" fill="none"/></svg>
<svg style="left:968px;top:191px" width="6" height="4" viewBox="0 0 6 4"><path d="M0 0 H6 L3 3 Z" fill="#222"/></svg>
<div class="a" style="left:748px;top:218px;width:1px;height:220px;background:repeating-linear-gradient(180deg,#777 0 1px,transparent 1px 2px);"></div>
<svg style="left:744px;top:209px" width="9" height="9" viewBox="0 0 9 9"><rect x="0.5" y="0.5" width="8" height="8" rx="1" fill="#f4f4f4" stroke="#9a9a9a"/><path d="M2 4.5 H7" stroke="#3f5fa8" stroke-width="1"/></svg>
<div class="a" style="left:753px;top:213px;width:7px;height:1px;background:repeating-linear-gradient(90deg,#777 0 1px,transparent 1px 2px);"></div>
<svg style="left:761px;top:207px" width="13" height="12" viewBox="0 0 13 12"><rect x="0.5" y="0.5" width="12" height="11" fill="#fff" stroke="#707070"/><rect x="0" y="0" width="13" height="3" fill="#3f7dc4"/><path d="M3 5.5 H4 M6 5.5 H7 M9 5.5 H10 M3 7.5 H4 M6 7.5 H7 M9 7.5 H10 M3 9.5 H4 M6 9.5 H7 M9 9.5 H10" stroke="#8fb0da"/></svg>
<div class="t" style="left:780px;top:207.69px;font-size:11px;color:#000;letter-spacing:-0.2px;">Data Sources</div>
<div class="a" style="left:767px;top:219px;width:1px;height:6px;background:repeating-linear-gradient(180deg,#777 0 1px,transparent 1px 2px);"></div>
<svg style="left:763px;top:225px" width="9" height="9" viewBox="0 0 9 9"><rect x="0.5" y="0.5" width="8" height="8" rx="1" fill="#f4f4f4" stroke="#9a9a9a"/><path d="M2 4.5 H7" stroke="#3f5fa8" stroke-width="1"/></svg>
<div class="a" style="left:772px;top:229px;width:7px;height:1px;background:repeating-linear-gradient(90deg,#777 0 1px,transparent 1px 2px);"></div>
<svg style="left:780px;top:222px" width="12" height="13" viewBox="0 0 12 13"><ellipse cx="6" cy="2.5" rx="5.8" ry="2.3" fill="#f0cf90"/><path d="M0.2 2.5 V10.5 A5.8 2.3 0 0 0 11.8 10.5 V2.5 A5.8 2.3 0 0 1 0.2 2.5 Z" fill="#e4b868"/></svg>
<div class="t" style="left:799px;top:224.19px;font-size:11px;color:#000;letter-spacing:-0.1px;">MS SQL [MS SQL]</div>
<div class="a" style="left:786px;top:235px;width:1px;height:6px;background:repeating-linear-gradient(180deg,#777 0 1px,transparent 1px 2px);"></div>
<svg style="left:782px;top:241px" width="9" height="9" viewBox="0 0 9 9"><rect x="0.5" y="0.5" width="8" height="8" rx="1" fill="#f4f4f4" stroke="#9a9a9a"/><path d="M2 4.5 H7" stroke="#3f5fa8" stroke-width="1"/></svg>
<div class="a" style="left:791px;top:245px;width:7px;height:1px;background:repeating-linear-gradient(90deg,#777 0 1px,transparent 1px 2px);"></div>
<svg style="left:799px;top:239px" width="13" height="12" viewBox="0 0 13 12"><rect x="0.5" y="0.5" width="12" height="11" fill="#fff" stroke="#707070"/><rect x="0" y="0" width="13" height="3" fill="#3f7dc4"/><path d="M3 5.5 H4 M6 5.5 H7 M9 5.5 H10 M3 7.5 H4 M6 7.5 H7 M9 7.5 H10 M3 9.5 H4 M6 9.5 H7 M9 9.5 H10" stroke="#8fb0da"/></svg>
<div class="a" style="left:816px;top:237px;width:46px;height:16px;background:#e8e8e8;"></div>
<div class="t" style="left:818px;top:240.19px;font-size:11px;color:#000;letter-spacing:-0.15px;">Students</div>
<div class="a" style="left:805px;top:251px;width:1px;height:107px;background:repeating-linear-gradient(180deg,#777 0 1px,transparent 1px 2px);"></div>
<div class="a" style="left:806px;top:261px;width:10px;height:1px;background:repeating-linear-gradient(90deg,#777 0 1px,transparent 1px 2px);"></div>
<svg style="left:817px;top:256px" width="15" height="9" viewBox="0 0 15 9"><rect x="0.5" y="0.5" width="14.5" height="8" fill="#fff" stroke="#7d8fae"/><text x="7.7" y="7.3" font-size="7.5" text-anchor="middle" fill="#1f2f50" font-family="Liberation Mono" font-weight="bold" letter-spacing="-0.7">123</text></svg>
<div class="t" style="left:837px;top:256.19px;font-size:11px;color:#000;letter-spacing:-0.25px;">StudentID</div>
<div class="a" style="left:806px;top:277px;width:10px;height:1px;background:repeating-linear-gradient(90deg,#777 0 1px,transparent 1px 2px);"></div>
<svg style="left:817px;top:272px" width="15" height="9" viewBox="0 0 15 9"><rect x="0.5" y="0.5" width="14.5" height="8" fill="#fff" stroke="#7d8fae"/><text x="7.7" y="7.3" font-size="7.5" text-anchor="middle" fill="#1f2f50" font-family="Liberation Mono" font-weight="bold" letter-spacing="-0.7">abc</text></svg>
<div class="t" style="left:837px;top:272.19px;font-size:11px;color:#000;letter-spacing:-0.25px;">FirstName</div>
<div class="a" style="left:806px;top:293px;width:10px;height:1px;background:repeating-linear-gradient(90deg,#777 0 1px,transparent 1px 2px);"></div>
<svg style="left:817px;top:288px" width="15" height="9" viewBox="0 0 15 9"><rect x="0.5" y="0.5" width="14.5" height="8" fill="#fff" stroke="#7d8fae"/><text x="7.7" y="7.3" font-size="7.5" text-anchor="middle" fill="#1f2f50" font-family="Liberation Mono" font-weight="bold" letter-spacing="-0.7">abc</text></svg>
<div class="t" style="left:837px;top:288.19px;font-size:11px;color:#000;letter-spacing:-0.25px;">LastName</div>
<div class="a" style="left:806px;top:309px;width:10px;height:1px;background:repeating-linear-gradient(90deg,#777 0 1px,transparent 1px 2px);"></div>
<svg style="left:817px;top:304px" width="15" height="9" viewBox="0 0 15 9"><rect x="0.5" y="0.5" width="14.5" height="8" fill="#fff" stroke="#7d8fae"/><text x="7.7" y="7.3" font-size="7.5" text-anchor="middle" fill="#1f2f50" font-family="Liberation Mono" font-weight="bold" letter-spacing="-0.7">abc</text></svg>
<div class="t" style="left:837px;top:304.19px;font-size:11px;color:#000;letter-spacing:-0.25px;">Gender</div>
<div class="a" style="left:806px;top:325px;width:10px;height:1px;background:repeating-linear-gradient(90deg,#777 0 1px,transparent 1px 2px);"></div>
<svg style="left:817px;top:320px" width="15" height="9" viewBox="0 0 15 9"><rect x="0.5" y="0.5" width="14.5" height="8" fill="#fff" stroke="#7d8fae"/><text x="7.7" y="7.3" font-size="7.5" text-anchor="middle" fill="#1f2f50" font-family="Liberation Mono" font-weight="bold" letter-spacing="-0.7">123</text></svg>
<div class="t" style="left:837px;top:320.19px;font-size:11px;color:#000;letter-spacing:-0.25px;">Age</div>
<div class="a" style="left:806px;top:341px;width:10px;height:1px;background:repeating-linear-gradient(90deg,#777 0 1px,transparent 1px 2px);"></div>
<svg style="left:817px;top:336px" width="15" height="9" viewBox="0 0 15 9"><rect x="0.5" y="0.5" width="14.5" height="8" fill="#fff" stroke="#7d8fae"/><text x="7.7" y="7.3" font-size="7.5" text-anchor="middle" fill="#1f2f50" font-family="Liberation Mono" font-weight="bold" letter-spacing="-0.7">123</text></svg>
<div class="t" style="left:837px;top:336.19px;font-size:11px;color:#000;letter-spacing:-0.25px;">Salary</div>
<div class="a" style="left:806px;top:357px;width:10px;height:1px;background:repeating-linear-gradient(90deg,#777 0 1px,transparent 1px 2px);"></div>
<svg style="left:817px;top:352px" width="15" height="9" viewBox="0 0 15 9"><rect x="0.5" y="0.5" width="14.5" height="8" fill="#fff" stroke="#7d8fae"/><text x="7.7" y="7.3" font-size="7.5" text-anchor="middle" fill="#1f2f50" font-family="Liberation Mono" font-weight="bold" letter-spacing="-0.7">abc</text></svg>
<div class="t" style="left:837px;top:352.19px;font-size:11px;color:#000;letter-spacing:-0.25px;">Address</div>
<div class="a" style="left:749px;top:373px;width:10px;height:1px;background:repeating-linear-gradient(90deg,#777 0 1px,transparent 1px 2px);"></div>
<svg style="left:760px;top:366px" width="15" height="15" viewBox="0 0 15 15"><path d="M4 0 L8 4 L4 8 L0 4 Z" fill="#e8c27e"/><path d="M11 3 L15 7 L11 11 L7 7 Z" fill="#9a5bc8"/><path d="M11 9 L15 12 L11 15 L7 12 Z" fill="#3f7dc4"/><path d="M2.5 7.5 V11.5 H7" stroke="#777" fill="none"/></svg>
<div class="t" style="left:780px;top:368.19px;font-size:11px;color:#000;letter-spacing:-0.2px;">Business Objects</div>
<div class="a" style="left:749px;top:389px;width:10px;height:1px;background:repeating-linear-gradient(90deg,#777 0 1px,transparent 1px 2px);"></div>
<svg style="left:760px;top:384px" width="15" height="9" viewBox="0 0 15 9"><rect x="0.5" y="0.5" width="14" height="8" fill="#fff" stroke="#6f8fbf"/><rect x="0" y="0" width="2" height="9" fill="#3f7dc4"/><text x="8.5" y="7.3" font-size="6.5" text-anchor="middle" fill="#2a3f6a" font-family="Liberation Sans" font-weight="bold">VAR</text></svg>
<div class="t" style="left:780px;top:384.19px;font-size:11px;color:#000;letter-spacing:-0.2px;">Variables</div>
<svg style="left:744px;top:401px" width="9" height="9" viewBox="0 0 9 9"><rect x="0.5" y="0.5" width="8" height="8" rx="1" fill="#f4f4f4" stroke="#9a9a9a"/><path d="M2 4.5 H7" stroke="#3f5fa8" stroke-width="1"/><path d="M4.5 2 V7" stroke="#3f5fa8" stroke-width="1"/></svg>
<div class="a" style="left:753px;top:405px;width:6px;height:1px;background:repeating-linear-gradient(90deg,#777 0 1px,transparent 1px 2px);"></div>
<svg style="left:760px;top:400px" width="15" height="9" viewBox="0 0 15 9"><rect x="0.5" y="0.5" width="14" height="8" fill="#fff" stroke="#6f8fbf"/><rect x="0" y="0" width="2" height="9" fill="#3f7dc4"/><text x="8.5" y="7.3" font-size="7" text-anchor="middle" fill="#2a3f6a" font-family="Liberation Sans" font-weight="bold">Σ#</text></svg>
<div class="t" style="left:780px;top:400.19px;font-size:11px;color:#000;letter-spacing:-0.2px;">System Variables</div>
<svg style="left:744px;top:417px" width="9" height="9" viewBox="0 0 9 9"><rect x="0.5" y="0.5" width="8" height="8" rx="1" fill="#f4f4f4" stroke="#9a9a9a"/><path d="M2 4.5 H7" stroke="#3f5fa8" stroke-width="1"/><path d="M4.5 2 V7" stroke="#3f5fa8" stroke-width="1"/></svg>
<div class="a" style="left:753px;top:421px;width:6px;height:1px;background:repeating-linear-gradient(90deg,#777 0 1px,transparent 1px 2px);"></div>
<div class="t" style="left:761px;top:414.15px;font-size:14px;color:#333;font-family:'Liberation Serif',serif;-webkit-text-stroke:0;"><i>fx</i></div>
<div class="t" style="left:780px;top:416.19px;font-size:11px;color:#000;letter-spacing:-0.2px;">Functions</div>
<div class="a" style="left:749px;top:437px;width:10px;height:1px;background:repeating-linear-gradient(90deg,#777 0 1px,transparent 1px 2px);"></div>
<svg style="left:759px;top:429px" width="15" height="16" viewBox="0 0 15 16"><path d="M3.5 1.5 H11 L14.5 5 V15.5 H3.5 Z" fill="#fff" stroke="#707070"/><path d="M11 1.5 V5 H14.5" fill="none" stroke="#707070"/><rect x="0.5" y="4.5" width="7" height="8" fill="#fff" stroke="#707070"/><path d="M2 6.5 H6 M2 8.5 H6 M2 10.5 H6" stroke="#3f7dc4"/></svg>
<div class="t" style="left:780px;top:432.19px;font-size:11px;color:#000;letter-spacing:-0.2px;">Resources</div>
<div class="a" style="left:740px;top:602px;width:13px;height:13px;background:#fff;border:1px solid #c4c4c4;"></div>
<div class="t" style="left:759px;top:604.69px;font-size:11px;color:#000;letter-spacing:-0.25px;">Create Field on Double Click</div>
<div class="a" style="left:740px;top:618px;width:13px;height:13px;background:#fff;border:1px solid #c4c4c4;"></div>
<div class="t" style="left:759px;top:620.69px;font-size:11px;color:#000;letter-spacing:-0.25px;">Create Label</div>
<div class="a" style="left:740px;top:634px;width:13px;height:13px;background:#fff;border:1px solid #c4c4c4;"></div>
<div class="t" style="left:759px;top:636.69px;font-size:11px;color:#000;letter-spacing:-0.25px;">Use Aliases</div>
<div class="a" style="left:735px;top:651px;width:298px;height:1px;background:#fff;"></div>
<svg style="left:742px;top:656px" width="17" height="15" viewBox="0 0 17 15"><rect x="0.5" y="5.5" width="13" height="9" fill="#fff" stroke="#7a7a7a"/><path d="M2.5 8.5 H6 M8 8.5 H11.5 M2.5 10.5 H6 M8 10.5 H11.5 M2.5 12.5 H6 M8 12.5 H11.5" stroke="#8fb0da"/><path d="M1.5 6 C3 3 5 1 9 0.5 C12 0.2 14 1 14.5 2.5 L13.5 5.5 C11 6.5 8 6 5 8 Z" fill="#e8c060" stroke="#9a7a30" stroke-width="0.6"/><rect x="14.5" y="0.5" width="2" height="5" fill="#4aa83a"/></svg>
<div class="t" style="left:765px;top:657.69px;font-size:11px;color:#000;letter-spacing:-0.15px;">Properties</div>
<div class="a" style="left:820px;top:652px;width:82px;height:22px;background:#fff;border:1px solid #d8d8d8;border-top:none;"></div>
<div class="a" style="left:820px;top:672px;width:82px;height:2px;background:#2b579a;"></div>
<svg style="left:826px;top:657px" width="12" height="12" viewBox="0 0 12 12"><rect x="5.5" y="0.5" width="6" height="7" fill="#fff" stroke="#7a7a7a"/><rect x="5" y="0" width="7" height="2.5" fill="#3f7dc4"/><path d="M9.5 3.5 V4.5 M9.5 5.5 V6.5" stroke="#7a7a7a"/><rect x="0.5" y="4.5" width="7" height="7" fill="#fff" stroke="#7a7a7a"/><rect x="0" y="4" width="8" height="2.5" fill="#3f7dc4"/><path d="M2.5 8.5 H3.5 M4.5 8.5 H5.5 M2.5 10 H3.5 M4.5 10 H5.5" stroke="#7a7a7a"/></svg>
<div class="t" style="left:847px;top:657.69px;font-size:11px;color:#2b579a;letter-spacing:-0.25px;">Dictionary</div>
<svg style="left:907px;top:656px" width="14" height="14" viewBox="0 0 14 14"><rect x="0.5" y="0.5" width="13" height="13" fill="#fff" stroke="#707070"/><path d="M2.5 3 H8 M4 4 V11 M4 7.5 H6 M4 10.5 H6" stroke="#3f7dc4" stroke-width="1"/><rect x="7" y="6.5" width="4.5" height="2" fill="#3f7dc4"/><rect x="7" y="9.5" width="4.5" height="2" fill="#3f7dc4"/></svg>
<div class="t" style="left:929px;top:657.69px;font-size:11px;color:#000;letter-spacing:-0.15px;">Report Tree</div>
<div class="a" style="left:0px;top:677px;width:1040px;height:28px;background:#2b579a;"></div>
<div class="t" style="left:13px;top:685.34px;font-size:12px;color:#fff;letter-spacing:-0.2px;">Inches</div>
<svg style="left:59px;top:690px" width="6" height="4" viewBox="0 0 6 4"><path d="M0 3.5 L3 0 L6 3.5 Z" fill="#fff"/></svg>
<div class="a" style="left:68px;top:682px;width:1px;height:16px;background:#8aa2c8;"></div>
<svg style="left:79px;top:685px" width="7" height="11" viewBox="0 0 7 11"><path d="M0 0 L6.5 5.5 L0 11 Z" fill="#fff"/></svg>
<div class="t" style="left:95.5px;top:685.34px;font-size:12px;color:#fff;letter-spacing:-0.35px;">Check for Issues</div>
<div class="a" style="left:188px;top:682px;width:1px;height:16px;background:#8aa2c8;"></div>
<div class="t" style="left:196.5px;top:685.34px;font-size:12px;color:#fff;letter-spacing:-0.25px;">DataStudents</div>
<div class="a" style="left:274px;top:682px;width:1px;height:16px;background:#8aa2c8;"></div>
<div class="t" style="left:279px;top:685.34px;font-size:12px;color:#fff;letter-spacing:-0.3px;">X:0.00</div>
<div class="t" style="left:317px;top:685.34px;font-size:12px;color:#fff;letter-spacing:-0.3px;">Y:0.90</div>
<div class="t" style="left:353.5px;top:685.34px;font-size:12px;color:#fff;letter-spacing:-0.3px;">Width:7.72</div>
<div class="t" style="left:415.5px;top:685.34px;font-size:12px;color:#fff;letter-spacing:-0.3px;">Height:0.30</div>
<div class="a" style="left:738px;top:680px;width:1px;height:23px;background:#8aa2c8;"></div>
<svg style="left:746px;top:684px" width="15" height="13" viewBox="0 0 15 13"><rect x="0.5" y="0.5" width="14" height="12" fill="#fff" stroke="#bfb3a0"/><path d="M4 4.5 H11 M4 6.5 H11 M4 8.5 H11" stroke="#4a86c8"/><path d="M1.5 6.5 L4.5 3.5 V9.5 Z M13.5 6.5 L10.5 3.5 V9.5 Z" fill="#4a86c8"/></svg>
<svg style="left:769px;top:684px" width="14" height="13" viewBox="0 0 14 13"><rect x="0.5" y="0.5" width="13" height="12" fill="#fff" stroke="#bfb3a0"/><path d="M2.5 5.5 H11.5 M2.5 7.5 H11.5" stroke="#4a86c8"/><path d="M7 1.5 L4 4 H10 Z M7 11.5 L4 9 H10 Z" fill="#4a86c8"/></svg>
<svg style="left:791px;top:684px" width="14" height="13" viewBox="0 0 14 13"><rect x="0.5" y="0.5" width="13" height="12" fill="#fff" stroke="#bfb3a0"/><rect x="3.5" y="2.5" width="7" height="8" fill="#fff" stroke="#4a86c8"/><path d="M5 4.5 H9 M5 6.5 H9 M5 8.5 H9" stroke="#4a86c8"/></svg>
<svg style="left:813px;top:682px" width="16" height="16" viewBox="0 0 16 16"><path d="M0 0.5 H7 L10 3.5 V13 H0 Z" fill="#fff"/><path d="M1.5 2.5 H6 M1.5 4.5 H8 M1.5 6.5 H8 M1.5 8.5 H8" stroke="#9aaac4"/><path d="M12 0.5 H16 M15.5 0.5 V8" stroke="#c9a060" stroke-dasharray="1 1"/><rect x="4" y="8" width="12" height="7" fill="#4a7fc0"/><text x="10" y="14.2" font-size="6.5" text-anchor="middle" fill="#fff" font-family="Liberation Sans" font-weight="bold">100</text></svg>
<div class="t" style="left:842px;top:685.34px;font-size:12px;color:#fff;letter-spacing:-0.1px;">75%</div>
<div class="a" style="left:880px;top:690px;width:8px;height:2px;background:#fff;"></div>
<div class="a" style="left:892px;top:691px;width:96px;height:1px;background:#6f8fc2;"></div>
<div class="a" style="left:941px;top:688px;width:1px;height:7px;background:#6f8fc2;"></div>
<svg style="left:924px;top:685px" width="9" height="11" viewBox="0 0 9 11"><path d="M0.5 0.5 H8.5 V7 L4.5 10.5 L0.5 7 Z" fill="#fff" stroke="#ddd"/></svg>
<svg style="left:992px;top:687px" width="9" height="9" viewBox="0 0 9 9"><path d="M0 4.5 H9 M4.5 0 V9" stroke="#fff" stroke-width="2"/></svg>
<svg style="left:1022px;top:692px" width="12" height="11" viewBox="0 0 12 11"><rect x="8" y="0" width="2" height="2" fill="#cfd9ea"/><rect x="4" y="4" width="2" height="2" fill="#cfd9ea"/><rect x="8" y="4" width="2" height="2" fill="#cfd9ea"/><rect x="0" y="8" width="2" height="2" fill="#cfd9ea"/><rect x="4" y="8" width="2" height="2" fill="#cfd9ea"/><rect x="8" y="8" width="2" height="2" fill="#cfd9ea"/></svg>
<div class="a" style="left:97px;top:151px;width:92px;height:37px;background:#ffff30;mix-blend-mode:multiply;"></div>
</body></html>
